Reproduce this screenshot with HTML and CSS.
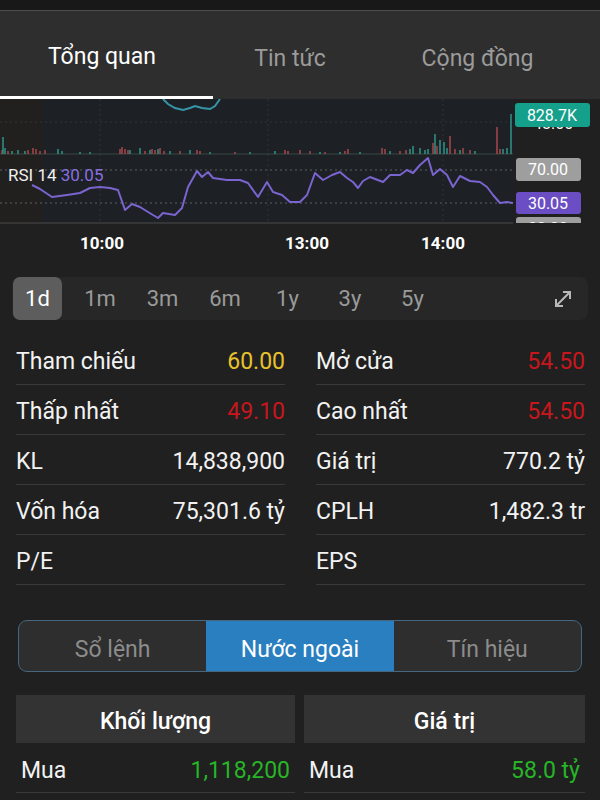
FILE: index.html
```html
<!DOCTYPE html>
<html lang="vi">
<head>
    <meta charset="UTF-8">
    <meta name="viewport" content="width=device-width, initial-scale=1.0">
    <title>Tổng quan</title>
    <link rel="stylesheet" href="styles.css">
</head>
<body>
    <div class="status"></div>
    <div class="tabs">
        <div class="tab tab-first active">Tổng quan</div>
        <div class="tab">Tin tức</div>
        <div class="tab tab-last">Cộng đồng</div>
    </div>

    <div class="chart">
        <svg width="600" height="166" viewBox="0 0 600 166">
            <defs>
                <clipPath id="plot"><rect x="0" y="0" width="600" height="124"/></clipPath>
            </defs>
            <g clip-path="url(#plot)">
                <rect x="0" y="0" width="42" height="124" fill="#221f1f"/>
                <rect x="42" y="0" width="472" height="124" fill="#1d2025"/>
                <rect x="514" y="0" width="86" height="124" fill="#202020"/>

                <!-- grid -->
                <g stroke="#30353b" stroke-width="1" stroke-dasharray="2 3">
                    <line x1="0" y1="23" x2="513" y2="23"/>
                    <line x1="100" y1="0" x2="100" y2="124"/>
                    <line x1="268" y1="0" x2="268" y2="124"/>
                    <line x1="443" y1="0" x2="443" y2="124"/>
                </g>
                <g stroke="#5c5f63" stroke-width="1" stroke-dasharray="2 3">
                    <line x1="0" y1="71" x2="513" y2="71"/>
                    <line x1="0" y1="104" x2="513" y2="104"/>
                </g>

                <!-- price line -->
                <polyline fill="none" stroke="#3596a8" stroke-width="2"
                    points="163,0 168,5 175,9 183,11 190,9 195,7 202,9 210,10 215,7 220,0"/>

                <!-- volume -->
                <line x1="0" y1="55" x2="513" y2="55" stroke="#3b4944" stroke-width="1"/>
                <path stroke="#a8474b" stroke-width="1.5" fill="none"
                    d="M2 55v-4M8 55v-3M28 55v-4M33 55v-6M36 55v-5M40 55v-3M45 55v-4M120 55v-5M122 55v-7M125 55v-5M128 55v-4M145 55v-3M152 55v-5M155 55v-4M160 55v-6M164 55v-3M180 55v-3M197 55v-4M200 55v-3M235 55v-2M285 55v-4M288 55v-3M300 55v-4M310 55v-3M325 55v-2M345 55v-3M348 55v-5M382 55v-6M385 55v-5M400 55v-3M406 55v-4M433 55v-11M437 55v-8M450 55v-18M455 55v-5M463 55v-6M470 55v-4M497 55v-27M500 55v-5"/>
                <path stroke="#2e9486" stroke-width="1.5" fill="none"
                    d="M3 55v-17M5 55v-6M12 55v-3M18 55v-4M25 55v-3M58 55v-5M62 55v-3M80 55v-2M90 55v-2M130 55v-4M140 55v-6M150 55v-4M158 55v-5M170 55v-3M190 55v-4M210 55v-2M250 55v-2M275 55v-3M320 55v-2M340 55v-2M360 55v-2M390 55v-3M410 55v-5M413 55v-8M420 55v-6M425 55v-4M428 55v-5M435 55v-20M440 55v-14M444 55v-12M447 55v-6M460 55v-4M475 55v-3M503 55v-5M507 55v-6M511 55v-40"/>

                <!-- rsi -->
                <polyline fill="none" stroke="#7a64cf" stroke-width="2" stroke-linejoin="round"
                    points="32,86 40,90 52,98 67,96 80,94 90,89 100,88 110,89 118,91 125,111 132,105 140,108 148,113 158,119 163,114 175,116 182,109 188,88 197,72 202,78 208,73 213,79 227,81 240,81 248,84 258,98 267,83 273,93 282,96 290,103 300,103 307,96 315,74 323,81 332,76 340,73 347,79 353,83 358,89 363,82 370,78 383,83 390,76 400,76 407,71 413,74 420,66 428,59 433,76 440,70 447,76 453,88 460,77 470,82 480,83 487,88 493,96 500,104 507,103 513,104"/>
                <text class="rsi-label" x="8" y="82">RSI 14 <tspan class="rsi-value">30.05</tspan></text>

                <!-- axis tags -->
                <text class="tag" x="533" y="30">48.00</text>
                <rect x="515" y="4" width="75" height="24" rx="3" fill="#15a08b"/>
                <text class="tag" x="552" y="22" text-anchor="middle">828.7K</text>
                <rect x="516" y="59" width="65" height="23" rx="3" fill="#9e9e9e"/>
                <text class="tag" x="548" y="76" text-anchor="middle">70.00</text>
                <rect x="516" y="93" width="65" height="22" rx="3" fill="#6b4ec4"/>
                <text class="tag" x="548" y="110" text-anchor="middle">30.05</text>
                <rect x="516" y="118" width="65" height="22" rx="3" fill="#9e9e9e"/>
                <text class="tag" x="548" y="135" text-anchor="middle">30.00</text>
            </g>
            <line x1="0" y1="124" x2="513" y2="124" stroke="#3c3c3c" stroke-width="1.5"/>

            <text class="time" x="102" y="150" text-anchor="middle">10:00</text>
            <text class="time" x="307" y="150" text-anchor="middle">13:00</text>
            <text class="time" x="443" y="150" text-anchor="middle">14:00</text>
        </svg>
    </div>

    <div class="range">
        <div class="range-item active">1d</div>
        <div class="range-item">1m</div>
        <div class="range-item">3m</div>
        <div class="range-item">6m</div>
        <div class="range-item">1y</div>
        <div class="range-item">3y</div>
        <div class="range-item">5y</div>
        <svg class="range-expand" width="22" height="22" viewBox="0 0 22 22">
            <path d="M4 18 L18 4 M11 4 H18 V11 M4 11 V18 H11" fill="none" stroke="#b8b8b8" stroke-width="2"/>
        </svg>
    </div>

    <div class="stats">
        <div class="stat"><span>Tham chiếu</span><span class="ref">60.00</span></div>
        <div class="stat"><span>Mở cửa</span><span class="down">54.50</span></div>
        <div class="stat"><span>Thấp nhất</span><span class="down">49.10</span></div>
        <div class="stat"><span>Cao nhất</span><span class="down">54.50</span></div>
        <div class="stat"><span>KL</span><span>14,838,900</span></div>
        <div class="stat"><span>Giá trị</span><span>770.2 tỷ</span></div>
        <div class="stat"><span>Vốn hóa</span><span>75,301.6 tỷ</span></div>
        <div class="stat"><span>CPLH</span><span>1,482.3 tr</span></div>
        <div class="stat"><span>P/E</span><span></span></div>
        <div class="stat"><span>EPS</span><span></span></div>
    </div>

    <div class="segment">
        <div class="segment-item">Sổ lệnh</div>
        <div class="segment-item active">Nước ngoài</div>
        <div class="segment-item">Tín hiệu</div>
    </div>

    <div class="foreign">
        <div class="foreign-col">
            <div class="foreign-head">Khối lượng</div>
            <div class="foreign-row"><span>Mua</span><span class="up">1,118,200</span></div>
        </div>
        <div class="foreign-col">
            <div class="foreign-head">Giá trị</div>
            <div class="foreign-row"><span>Mua</span><span class="up">58.0 tỷ</span></div>
        </div>
    </div>
</body>
</html>
```

FILE: styles.css
```css
body {
    margin: 0;
    width: 600px;
    background: #202020;
    color: #f2f2f2;
    font-family: Roboto, "Noto Sans", sans-serif;
    overflow: hidden;
}
.status {
    height: 10px;
    background: #181818;
    border-bottom: 1px solid #4d4d4d;
}

/* Верхние вкладки */
.tabs {
    display: grid;
    grid-template-columns: 213px 154px 1fr;
    height: 88px;
    background: #2e2e2e;
}
.tab {
    display: flex;
    align-items: center;
    justify-content: center;
    padding-top: 6px;
    box-sizing: border-box;
    font-size: 23px;
    color: #9b9b9b;
}
.tab-first {
    padding-right: 9px;
}
.tab-last {
    padding-right: 12px;
}
.tab.active {
    color: #fff;
    border-bottom: 3px solid #fff;
}

/* График */
.chart svg {
    display: block;
}
.rsi-label {
    font-size: 17px;
    fill: #f0f0f0;
}
.rsi-value {
    fill: #8a6fe0;
}
.tag {
    font-size: 16px;
    fill: #fff;
}
.time {
    font-size: 17px;
    font-weight: bold;
    fill: #fff;
}

/* Периоды */
.range {
    display: flex;
    align-items: center;
    gap: 13.5px;
    margin: 12px 12px 0 12px;
    padding-left: 1px;
    height: 43px;
    background: #272727;
    border-radius: 8px;
}
.range-item {
    width: 49px;
    height: 43px;
    display: flex;
    align-items: center;
    justify-content: center;
    font-size: 22px;
    color: #9a9a9a;
    border-radius: 7px;
}
.range-item.active {
    background: #5d5d5d;
    color: #fff;
}
.range-expand {
    margin-left: auto;
    margin-right: 14px;
}

/* Показатели */
.stats {
    display: grid;
    grid-template-columns: 1fr 1fr;
    column-gap: 31px;
    margin-top: 15px;
    padding: 0 15px 0 16px;
}
.stat {
    display: flex;
    justify-content: space-between;
    align-items: center;
    height: 50px;
    box-sizing: border-box;
    padding-top: 3px;
    border-bottom: 1px solid #393939;
    font-size: 23px;
}
.ref {
    color: #e8c22b;
}
.down {
    color: #c8161d;
}
.up {
    color: #27b527;
}

/* Переключатель */
.segment {
    display: grid;
    grid-template-columns: 1fr 1fr 1fr;
    margin: 35px 18px 0 18px;
    height: 52px;
    box-sizing: border-box;
    border: 1.5px solid #44667f;
    border-radius: 9px;
    overflow: hidden;
    background: #2e2e2e;
}
.segment-item {
    display: flex;
    align-items: center;
    justify-content: center;
    padding-top: 7px;
    font-size: 23px;
    color: #8c8c8c;
}
.segment-item.active {
    background: #2a7fc0;
    color: #fff;
}

/* Иностранные инвесторы */
.foreign {
    display: grid;
    grid-template-columns: 279px 281px;
    column-gap: 9px;
    margin-top: 23px;
    padding-left: 16px;
}
.foreign-head {
    height: 48px;
    box-sizing: border-box;
    padding-top: 4px;
    display: flex;
    align-items: center;
    justify-content: center;
    background: #333;
    font-size: 23px;
    font-weight: 500;
    color: #fff;
}
.foreign-row {
    display: flex;
    justify-content: space-between;
    align-items: center;
    height: 50px;
    box-sizing: border-box;
    padding: 5px 5px 0 5px;
    border-bottom: 1px solid #393939;
    font-size: 23px;
}
```
